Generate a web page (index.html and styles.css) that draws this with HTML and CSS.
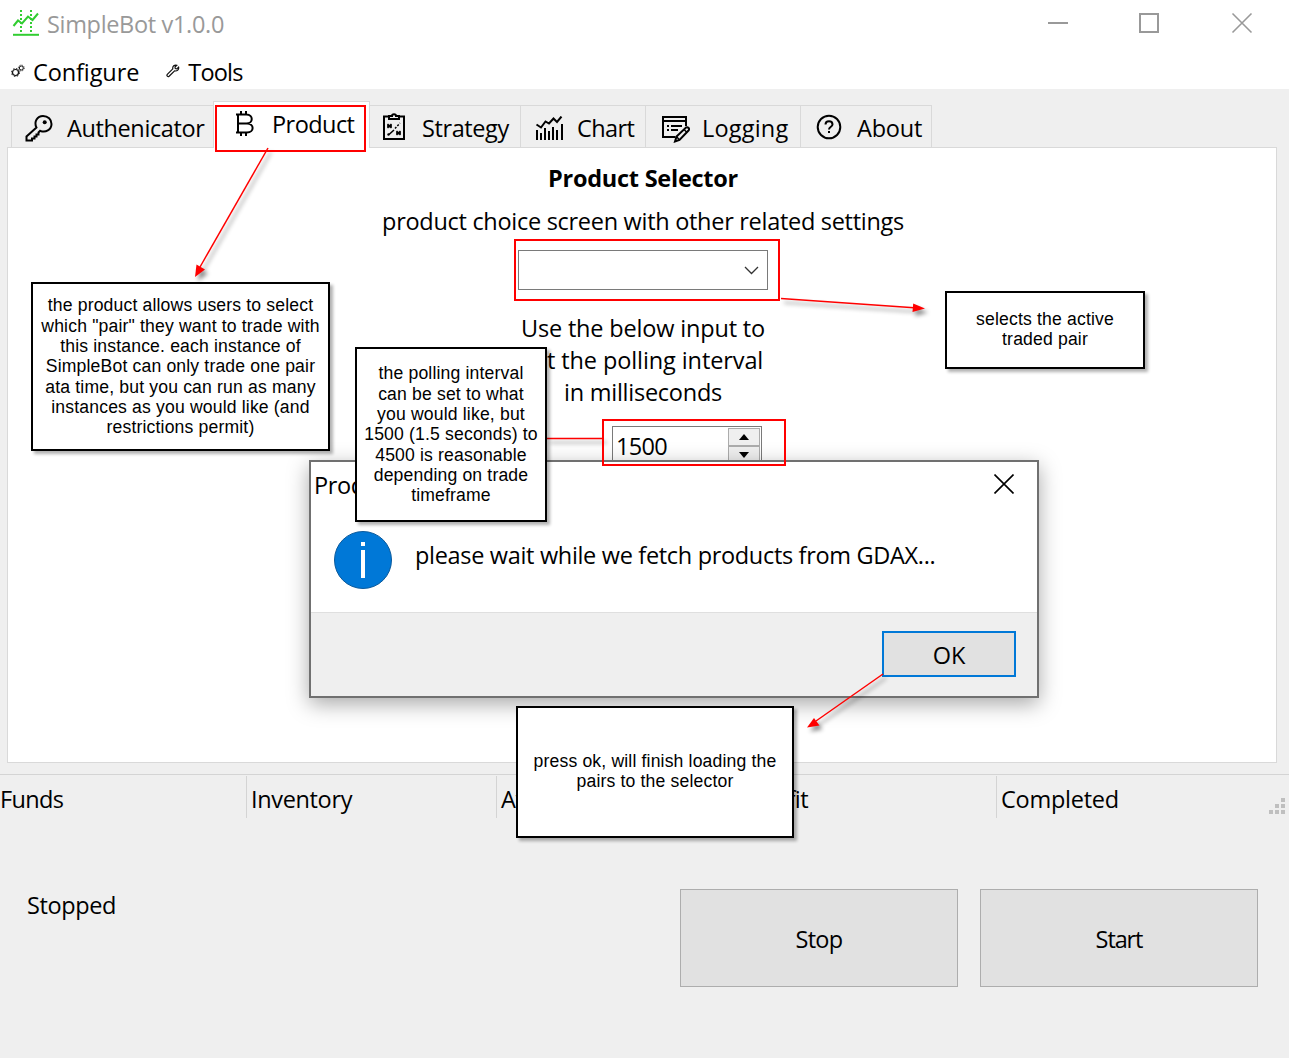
FILE: index.html
```html
<!DOCTYPE html>
<html lang="en">
<head>
<meta charset="utf-8">
<title>SimpleBot v1.0.0</title>
<link rel="stylesheet" href="styles.css">
</head>
<body>
<div class="window">
  <header class="titlebar">
    <svg class="app-icon" width="28" height="28" viewBox="0 0 28 28" fill="none" stroke="#32cd32">
      <path d="M1 25.8H27" stroke-width="2"/>
      <path d="M1.5 17L6 11.5L10 14.500L16 7.500L20.500 11L26 4.500" stroke-width="2"/>
      <path d="M9 1V23M19 1V23" stroke-width="2" stroke-dasharray="2 2"/>
    </svg>
    <span class="app-title">SimpleBot v1.0.0</span>
    <svg class="controls" width="206" height="22" viewBox="0 0 206 22" fill="none" stroke="#999" stroke-width="2">
      <path d="M0 11H20M92 2H110V20H92Z"/>
      <path d="M184.500 1.500L203.500 20.500M203.500 1.500L184.500 20.500" stroke-width="1.600"/>
    </svg>
  </header>
  <nav class="menubar">
    <span class="menu-item configure">
      <svg width="14" height="14" viewBox="0 0 14 14" fill="none" stroke="#111">
        <circle cx="4.500" cy="8.500" r="3" stroke-width="1.200"/>
        <circle cx="4.500" cy="8.500" r="4" stroke-width="1" stroke-dasharray="1.570 1.570"/>
        <circle cx="10.300" cy="4" r="2" stroke-width="1"/>
        <circle cx="10.300" cy="4" r="2.900" stroke-width=".9" stroke-dasharray="1.140 1.140"/>
      </svg>
      <span class="label">Configure</span>
    </span>
    <span class="menu-item tools">
      <svg width="14" height="14" viewBox="0 0 14 14" fill="none" stroke="#111" stroke-width="1.200">
        <path d="M10.800 1.200C8.500.5 6.300 2.300 6.800 4.900L1.300 10.300C.2 11.600 1.900 13.200 3.100 12.200L8.600 6.900C11.200 7.500 13.200 5.500 12.600 3.100L10.800 4.900L9.300 4.600L9 3Z"/>
      </svg>
      <span class="label">Tools</span>
    </span>
  </nav>

  <main class="tabs">
    <div class="tab-strip">
      <div class="tab auth">
        <svg width="28" height="28" viewBox="0 0 28 28" fill="none" stroke="#000" stroke-width="2">
          <path d="M11.500 13.600C8.500 7.500 12.500 2 18 2C23 2 26.500 5.500 26.500 10C26.500 16 20.500 19 15.200 16.800L13.500 18.500V20.500H11.500V22.500H9.500V24.500H7V26.500H1.500V22.500Z"/>
          <circle cx="19.700" cy="8.300" r="2" fill="#000" stroke="none"/>
        </svg>
        <span class="label">Authenicator</span>
      </div>
      <div class="tab product active">
        <svg width="20" height="28" viewBox="0 0 20 28" fill="none" stroke="#000" stroke-width="2">
          <path d="M3 4.500H11.500C18.500 4.500 18.500 13.500 11.500 13.500H3M3 4.500V22.500H12C19.500 22.500 19.500 13.500 12 13.500M1 4.500H3M1 22.500H3M6 1V4.500M11 1V4.500M6 22.500V26M11 22.500V26"/>
        </svg>
        <span class="label">Product</span>
      </div>
      <div class="tab strategy">
        <svg width="24" height="28" viewBox="0 0 24 28" fill="none" stroke="#000" stroke-width="2">
          <path d="M7 3.500H2V26H22V3.500H17M7 6V3H10C10 .5 14 .5 14 3H17V6Z"/>
          <path d="M5.500 11L9.500 15M9.500 11L5.500 15M5 13H10M14.500 18L18.500 22M18.500 18L14.500 22M14 20H19M7 21.500L12 17" stroke-width="1.600"/>
          <path d="M13 15.500L18 10" stroke-dasharray="2 1.500" stroke-width="1.500"/>
          <circle cx="6.500" cy="21.500" r="1.200" fill="#000" stroke="none"/>
        </svg>
        <span class="label">Strategy</span>
      </div>
      <div class="tab chart">
        <svg width="28" height="26" viewBox="0 0 28 26" fill="none" stroke="#000" stroke-width="2">
          <path d="M2 14V24M6 17V24M10 12V24M14 15V24M18 11V24M22 14V24M27 8V24"/>
          <path d="M1.500 8.500L6 11.500L10.500 5.500L14 7.500L18.500 2.500L22 6L26.500 .5"/>
        </svg>
        <span class="label">Chart</span>
      </div>
      <div class="tab logging">
        <svg width="29" height="28" viewBox="0 0 29 28" fill="none" stroke="#000" stroke-width="2">
          <path d="M14.500 22H2V2H25V11M2 6H25" />
          <path d="M6 11H8M10 11H21M6 15H8M10 15H17" stroke-width="1.800"/>
          <path d="M14 26.500L15.500 21.500L25 12.500C27 11.500 29 13.800 27.500 15.500L18.500 25Z"/>
          <path d="M23 14.500L25.800 17.200M15.500 21.500L18.500 25" stroke-width="1.400"/>
        </svg>
        <span class="label">Logging</span>
      </div>
      <div class="tab about">
        <svg width="26" height="26" viewBox="0 0 26 26" fill="none" stroke="#000" stroke-width="2">
          <circle cx="13" cy="13" r="11.300"/>
          <path d="M9.500 10.500C9.500 6.200 16.500 6.200 16.500 10.500C16.500 12.800 13 12.800 13 15.500M13 17V19"/>
        </svg>
        <span class="label">About</span>
      </div>
    </div>
    <section class="panel">
      <h1><span class="label">Product Selector</span></h1>
      <p class="subtitle"><span class="label">product choice screen with other related settings</span></p>
      <div class="combo">
        <svg width="15" height="9" viewBox="0 0 15 9" fill="none" stroke="#333" stroke-width="1.300"><path d="M1 1L7.500 7.500L14 1"/></svg>
      </div>
      <p class="polling">
        <span class="l1">Use the below input to</span><br>
        <span class="l2">set the polling interval</span><br>
        <span class="l3">in milliseconds</span>
      </p>
      <div class="spinner">
        <span class="value">1500</span>
        <div class="arrows">
          <div class="step"><svg width="10" height="6" viewBox="0 0 10 6"><path d="M0 6L5 0L10 6Z"/></svg></div>
          <div class="step"><svg width="10" height="6" viewBox="0 0 10 6"><path d="M0 0L5 6L10 0Z"/></svg></div>
        </div>
      </div>
    </section>
  </main>

  <div class="status">
    <span class="cell funds"><span class="label">Funds</span></span>
    <span class="cell inventory"><span class="label">Inventory</span></span>
    <span class="cell available"><span class="label">Available</span></span>
    <span class="cell profit"><span class="label">Profit</span></span>
    <span class="cell completed"><span class="label">Completed</span></span>
    <svg class="grip" width="16" height="16" viewBox="0 0 16 16" fill="#bfbfbf"><path d="M12 0h4v4h-4zM6 6h4v4h-4zM12 6h4v4h-4zM0 12h4v4h-4zM6 12h4v4h-4zM12 12h4v4h-4z"/></svg>
  </div>

  <footer class="actions">
    <span class="state">Stopped</span>
    <button class="big stop">Stop</button>
    <button class="big start">Start</button>
  </footer>
</div>

<div class="dialog">
  <div class="dialog-head">
    <span class="dialog-title">Product</span>
    <svg width="20" height="20" viewBox="0 0 20 20" fill="none" stroke="#000" stroke-width="1.600"><path d="M.5.5L19.500 19.500M19.500.5L.5 19.500"/></svg>
  </div>
  <div class="dialog-body">
    <svg width="58" height="58" viewBox="0 0 58 58"><circle cx="29" cy="29" r="28.500" fill="#0078d7" stroke="#0b5a9c"/><path d="M27 11h4v4h-4zM27 19h4v28h-4z" fill="#fff"/></svg>
    <span class="message">please wait while we fetch products from GDAX...</span>
  </div>
  <div class="dialog-foot"><button class="ok">OK</button></div>
</div>

<svg class="arrows-layer" width="1289" height="1059" viewBox="0 0 1289 1059">
  <g class="arrow">
    <path class="shaft" d="M268 148L200 267"/><path class="head" d="M195 277L196.500 264.500L205 269.500Z"/>
    <path class="shaft" d="M781 298.500L914 307.800"/><path class="head" d="M925 308.500L912.500 312L913.200 303.500Z"/>
    <path class="shaft" d="M547 438.400L604 438.600"/>
    <path class="shaft" d="M883 674L816 721"/><path class="head" d="M807 727.500L814 718L819.500 725.500Z"/>
  </g>
</svg>

<div class="highlight h-tab"></div>
<div class="highlight h-combo"></div>
<div class="highlight h-spin"></div>

<div class="note n-product">the product allows users to select<br>which "pair" they want to trade with<br>this instance. each instance of<br>SimpleBot can only trade one pair<br>ata time, but you can run as many<br>instances as you would like (and<br>restrictions permit)</div>
<div class="note n-pair">selects the active<br>traded pair</div>
<div class="note n-poll">the polling interval<br>can be set to what<br>you would like, but<br>1500 (1.5 seconds) to<br>4500 is reasonable<br>depending on trade<br>timeframe</div>
<div class="note n-ok">press ok, will finish loading the<br>pairs to the selector</div>
</body>
</html>
```
FILE: styles.css
```css
* { box-sizing: border-box; }
body {
  margin: 0;
  width: 1289px;
  height: 1059px;
  position: relative;
  overflow: hidden;
  background: #fff;
  color: #000;
  font: 23.5px/32px "Open Sans", "Noto Sans", sans-serif;
  white-space: nowrap;
}
h1, p { margin: 0; font-size: inherit; }
svg { display: block; flex: none; }
button { font: inherit; color: inherit; padding: 0; border-radius: 0; }

.window { height: 1058px; background: #efefef; display: flex; flex-direction: column; }

.titlebar { height: 50px; background: #fff; display: flex; align-items: flex-start; padding: 8px 35px 0 12px; }
.app-icon { margin-top: 1px; }
.app-title { margin-left: 7px; color: #999; letter-spacing: -0.33px; }
.controls { margin: 4px 0 0 auto; }

.menubar { height: 39px; background: #fff; display: flex; padding: 6px 0 0 11px; }
.menu-item { display: flex; }
.menu-item svg { margin-top: 8px; }
.menu-item .label { margin-left: 8px; letter-spacing: -0.1px; }
.tools { margin-left: 27px; }
.tools .label { letter-spacing: -0.8px; }

.tabs { height: 674px; padding: 12px 12px 0 7px; }
.tab-strip { height: 46px; display: flex; align-items: flex-end; padding-left: 4px; }
.tab { height: 42px; border: 1px solid #d9d9d9; border-bottom: 0; border-left-width: 0; display: flex; }
.tab .label { margin-top: 6px; }
.tab svg { margin-top: 8px; }
.auth { width: 202px; border-left-width: 1px; border-right: 0; padding-left: 13px; }
.auth .label { margin-left: 14px; letter-spacing: -0.38px; }
.product { width: 157px; border-left-width: 1px; background: #fff; padding-left: 21px; }
.product svg { margin-top: 8px; }
.product .label { margin-left: 17px; letter-spacing: -0.55px; }
.strategy { width: 151px; padding-left: 12px; }
.strategy svg { margin-top: 7px; }
.strategy .label { margin-left: 16px; letter-spacing: -0.4px; }
.chart { width: 125px; padding-left: 14px; }
.chart svg { margin-top: 10px; }
.chart .label { margin-left: 14px; letter-spacing: -0.6px; }
.logging { width: 155px; padding-left: 15px; }
.logging svg { margin-top: 9px; }
.logging .label { margin-left: 12px; letter-spacing: 0.2px; }
.about { width: 131px; padding-left: 15px; }
.about .label { margin-left: 15px; letter-spacing: -0.2px; }

.panel {
  width: 1270px; height: 616px;
  background: #fff; border: 1px solid #d9d9d9;
  display: flex; flex-direction: column; align-items: center;
  padding: 14px 0 0 2px;
}
.tab.active { margin-bottom: -1px; height: 47px; position: relative; }
h1 { letter-spacing: -0.25px; }
.subtitle { margin-top: 11px; letter-spacing: -0.29px; }
.combo { width: 250px; height: 40px; border: 1px solid #7a7a7a; margin-top: 13px; display: flex; justify-content: flex-end; align-items: center; padding-right: 8px; }
.polling { margin-top: 22px; text-align: center; }
.l1 { letter-spacing: -0.17px; }
.l2 { letter-spacing: -0.1px; }
.l3 { letter-spacing: -0.25px; }
.spinner { width: 150px; height: 41px; margin: 18px 0 0 88px; border: 1px solid #7a7a7a; display: flex; justify-content: space-between; padding: 1px; flex: none; }
.value { margin: 2px 0 0 2px; letter-spacing: -0.7px; }
.arrows { width: 32px; display: grid; grid-template-rows: 18px 18px; }
.step { background: #efefef; border: 1px solid #acacac; display: flex; align-items: center; justify-content: center; }

.status { height: 56px; margin-top: 11px; border-top: 1px solid #d4d4d4; display: flex; padding-top: 1px; }
.cell { width: 250px; height: 42px; border-right: 1px solid #d4d4d4; padding: 7px 0 0 4px; }
.funds { width: 247px; padding-left: 0; letter-spacing: -0.65px; }
.inventory { letter-spacing: -0.35px; }
.profit { letter-spacing: -0.5px; }
.completed { border-right: 0; letter-spacing: -0.25px; }
.grip { margin: 22px 4px 0 auto; }

.actions { display: flex; padding: 59px 31px 0 27px; }
.state { margin: 0 auto 0 0; letter-spacing: -0.4px; }
.big { width: 278px; height: 98px; background: #e1e1e1; border: 1px solid #adadad; padding-top: 2px; }
.stop { letter-spacing: -0.7px; }
.start { letter-spacing: -1.1px; }
.big + .big { margin-left: 22px; }

.dialog {
  position: absolute; left: 309px; top: 460px; width: 730px; height: 238px;
  background: #fff; border: 2px solid #707070;
  box-shadow: 0 6px 20px rgba(0,0,0,.34);
  display: flex; flex-direction: column;
}
.dialog-head { display: flex; justify-content: space-between; padding: 7px 23px 0 3px; height: 69px; }
.dialog-title { letter-spacing: -0.4px; }
.dialog-head svg { margin-top: 5px; }
.dialog-body { display: flex; padding-left: 23px; height: 81px; }
.message { margin: 8px 0 0 23px; letter-spacing: -0.32px; }
.dialog-foot { flex: 1; background: #efefef; border-top: 1px solid #dfdfdf; display: flex; justify-content: flex-end; padding: 18px 21px 0 0; }
.ok { width: 134px; height: 46px; background: #e1e1e1; border: 2px solid #0078d7; padding-top: 1px; }

.arrows-layer { position: absolute; left: 0; top: 0; }
.arrow { filter: drop-shadow(3px 4px 2px rgba(0,0,0,.45)); }
.shaft { stroke: #f00; stroke-width: 1.5; fill: none; }
.head { fill: #f00; }
.highlight { position: absolute; border: 2px solid #f00; }
.h-tab { left: 215px; top: 105px; width: 151px; height: 47px; }
.h-combo { left: 514px; top: 239px; width: 266px; height: 62px; }
.h-spin { left: 602px; top: 419px; width: 184px; height: 47px; }

.note {
  position: absolute; background: #fff; border: 2px solid #000;
  box-shadow: 3px 3px 3px rgba(0,0,0,.3);
  display: flex; align-items: center; justify-content: center; text-align: center;
  font: 17.6px/20.33px "Liberation Sans", Arial, sans-serif;
  letter-spacing: 0.16px;
}
.n-product { left: 31px; top: 282px; width: 299px; height: 169px; }
.n-pair { left: 945px; top: 291px; width: 200px; height: 78px; padding-bottom: 2px; }
.n-poll { left: 355px; top: 347px; width: 192px; height: 175px; }
.n-ok { left: 516px; top: 706px; width: 278px; height: 132px; padding-bottom: 2px; }
```
